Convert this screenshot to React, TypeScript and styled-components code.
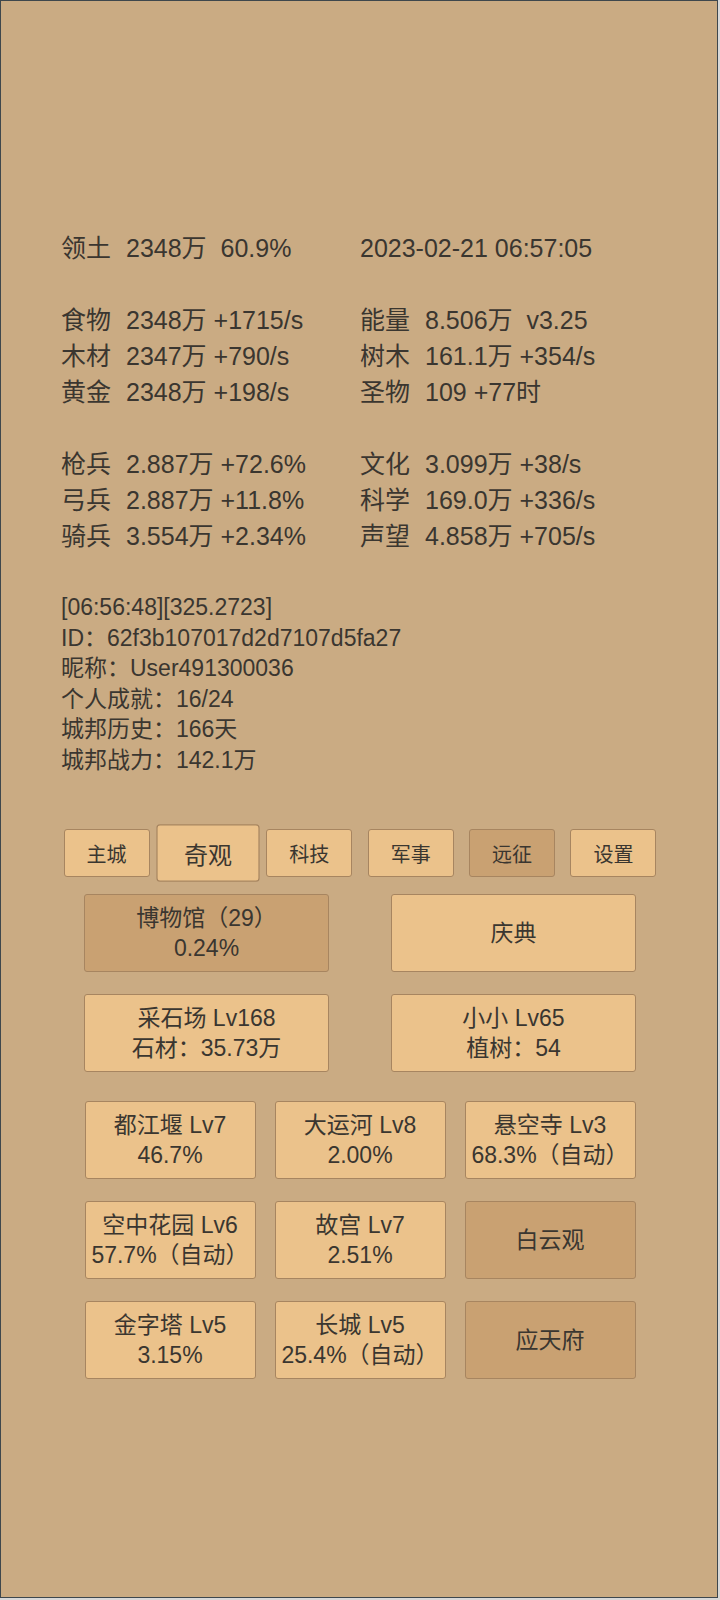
import React from "react";
import styled, { createGlobalStyle } from "styled-components";

const Global = createGlobalStyle`
  html, body { margin: 0; padding: 0; background: #d8d8d8; }
  body { font-family: "Liberation Sans", "Noto Sans CJK SC", sans-serif; }
  * { box-sizing: border-box; }
`;

const Frame = styled.div`
  width: 718px;
  height: 1598px;
  border: 1px solid #3e474c;
  background: #caab83;
  color: #3a3630;
  padding-top: 229px;
  display: flex;
  flex-direction: column;
`;

const StatsGrid = styled.div`
  margin-left: 60px;
  display: grid;
  grid-template-columns: 299px 299px;
  font-size: 25px;
  line-height: 36px;
  white-space: pre;
`;

const Cell = styled.div`
  display: flex;
  height: 36px;
`;

const Label = styled.span`
  width: 65px;
  flex: none;
`;

const Blank = styled.div`
  grid-column: span 2;
  height: 36px;
`;

const Info = styled.div`
  margin: 38px 0 0 60px;
  font-size: 23px;
  line-height: 30.5px;
`;

const TabBar = styled.div`
  margin-top: 54px;
  padding-left: 2px;
  display: flex;
  justify-content: center;
  gap: 15.4px;
`;

const Tab = styled.div<{ $active?: boolean; $dark?: boolean }>`
  width: 86px;
  height: 48px;
  display: flex;
  align-items: center;
  justify-content: center;
  font-size: 20px;
  background: ${(p) => (p.$dark ? "#c9a172" : "#ebc28b")};
  border: 1px solid #a78560;
  border-radius: 3px;
  transform: ${(p) => (p.$active ? "scale(1.2)" : "none")};
`;

const Grid = styled.div<{ $cols: number; $colW: number; $gap: number; $top: number }>`
  margin-top: ${(p) => p.$top}px;
  padding-left: 2px;
  display: grid;
  justify-content: center;
  grid-template-columns: repeat(${(p) => p.$cols}, ${(p) => p.$colW}px);
  column-gap: ${(p) => p.$gap}px;
  row-gap: 22px;
`;

const Btn = styled.div<{ $dark?: boolean }>`
  height: 78px;
  display: flex;
  flex-direction: column;
  align-items: center;
  justify-content: center;
  font-size: 23px;
  line-height: 30px;
  white-space: nowrap;
  background: ${(p) => (p.$dark ? "#c9a172" : "#ebc28b")};
  border: 1px solid #a78560;
  border-radius: 3px;
`;

type Stat = [string, string];

const rows: (Stat[] | null)[] = [
  null,
  [
    ["食物", "2348万 +1715/s"],
    ["能量", "8.506万  v3.25"],
  ],
  [
    ["木材", "2347万 +790/s"],
    ["树木", "161.1万 +354/s"],
  ],
  [
    ["黄金", "2348万 +198/s"],
    ["圣物", "109 +77时"],
  ],
  null,
  [
    ["枪兵", "2.887万 +72.6%"],
    ["文化", "3.099万 +38/s"],
  ],
  [
    ["弓兵", "2.887万 +11.8%"],
    ["科学", "169.0万 +336/s"],
  ],
  [
    ["骑兵", "3.554万 +2.34%"],
    ["声望", "4.858万 +705/s"],
  ],
];

const info = [
  "[06:56:48][325.2723]",
  "ID：62f3b107017d2d7107d5fa27",
  "昵称：User491300036",
  "个人成就：16/24",
  "城邦历史：166天",
  "城邦战力：142.1万",
];

const tabs = [
  { t: "主城" },
  { t: "奇观", active: true },
  { t: "科技" },
  { t: "军事" },
  { t: "远征", dark: true },
  { t: "设置" },
];

const big = [
  { l: ["博物馆（29）", "0.24%"], dark: true },
  { l: ["庆典"] },
  { l: ["采石场 Lv168", "石材：35.73万"] },
  { l: ["小小 Lv65", "植树：54"] },
];

const small = [
  { l: ["都江堰 Lv7", "46.7%"] },
  { l: ["大运河 Lv8", "2.00%"] },
  { l: ["悬空寺 Lv3", "68.3%（自动）"] },
  { l: ["空中花园 Lv6", "57.7%（自动）"] },
  { l: ["故宫 Lv7", "2.51%"] },
  { l: ["白云观"], dark: true },
  { l: ["金字塔 Lv5", "3.15%"] },
  { l: ["长城 Lv5", "25.4%（自动）"] },
  { l: ["应天府"], dark: true },
];

export default function App() {
  return (
    <>
      <Global />
      <Frame>
        <StatsGrid>
          <Cell>
            <Label>领土</Label>
            <span>2348万  60.9%</span>
          </Cell>
          <Cell>
            <span>2023-02-21 06:57:05</span>
          </Cell>
          {rows.map((r, i) =>
            r === null ? (
              <Blank key={i} />
            ) : (
              r.map(([a, b], j) => (
                <Cell key={`${i}-${j}`}>
                  <Label>{a}</Label>
                  <span>{b}</span>
                </Cell>
              ))
            )
          )}
        </StatsGrid>
        <Info>
          {info.map((s) => (
            <div key={s}>{s}</div>
          ))}
        </Info>
        <TabBar>
          {tabs.map((t) => (
            <Tab key={t.t} $active={t.active} $dark={t.dark}>
              {t.t}
            </Tab>
          ))}
        </TabBar>
        <Grid $cols={2} $colW={245} $gap={62} $top={17}>
          {big.map((b, i) => (
            <Btn key={i} $dark={b.dark}>
              {b.l.map((x) => (
                <div key={x}>{x}</div>
              ))}
            </Btn>
          ))}
        </Grid>
        <Grid $cols={3} $colW={171} $gap={19} $top={29}>
          {small.map((b, i) => (
            <Btn key={i} $dark={b.dark}>
              {b.l.map((x) => (
                <div key={x}>{x}</div>
              ))}
            </Btn>
          ))}
        </Grid>
      </Frame>
    </>
  );
}
